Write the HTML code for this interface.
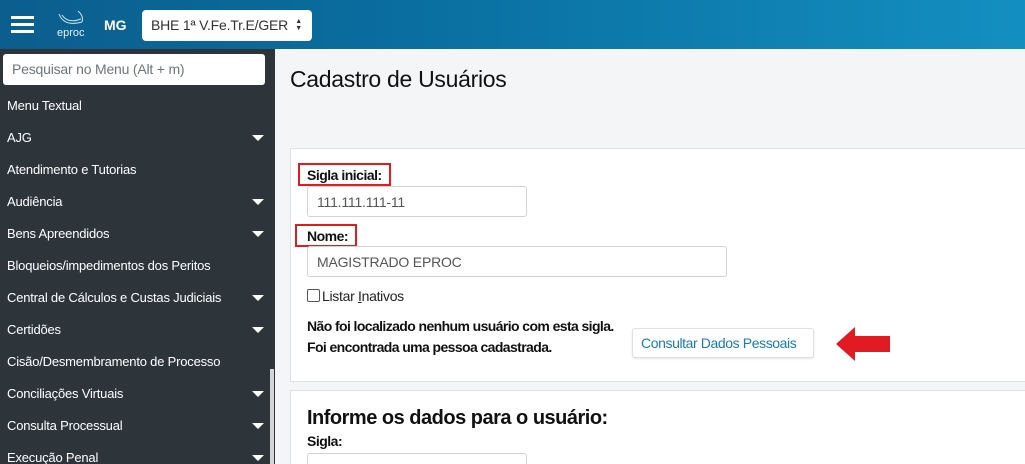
<!DOCTYPE html>
<html><head><meta charset="utf-8"><style>
*{box-sizing:border-box;margin:0;padding:0}
html,body{width:1025px;height:464px;overflow:hidden}
body{font-family:"Liberation Sans",sans-serif;background:#f4f5f7;position:relative}
.hdr{position:absolute;left:0;top:0;width:1025px;height:49px;background:linear-gradient(90deg,#0b5e8e,#0a6ea0 40%,#138fc0)}
.side{position:absolute;left:0;top:49px;width:275px;height:415px;background:#2d343a;overflow:hidden}
.search{position:absolute;left:3px;top:5px;width:262px;height:31px;background:#fff;border-radius:3px;font-size:14px;color:#6c757d;padding:7px 9px;letter-spacing:-0.2px}
.mi{position:absolute;left:7px;color:#fff;font-size:13px;letter-spacing:-0.2px}
.arr{position:absolute;left:252px;width:0;height:0;border-left:6px solid transparent;border-right:6px solid transparent;border-top:6px solid #fff}
.card{position:absolute;background:#fff;border:1px solid #dee2e6}
.lbl{position:absolute;font-size:14px;font-weight:bold;color:#111;letter-spacing:-0.5px;white-space:nowrap}
.inp{position:absolute;border:1px solid #ced4da;border-radius:3px;background:#fff;font-size:14px;color:#555;padding:7px 9px;letter-spacing:-0.2px}
.red{position:absolute;border:2px solid #e21b23}
</style></head><body>
<div class="hdr">
<div style="position:absolute;left:11px;top:16px;width:23px;height:3px;background:#fff;box-shadow:0 7px 0 #fff,0 14px 0 #fff"></div>
<svg style="position:absolute;left:58px;top:10px" width="26" height="20"><path d="M1 4 Q6 17 24 12 M4 5 Q10 14 23 9 M20 1 Q26 6 24 12" stroke="#cfe3f0" fill="none" stroke-width="1"/></svg>
<div style="position:absolute;left:57px;top:27px;color:#e6f0f7;font-size:11px">eproc</div>
<div style="position:absolute;left:104px;top:17px;color:#fff;font-weight:bold;font-size:14px">MG</div>
<div style="position:absolute;left:142px;top:10px;width:170px;height:31px;background:#fff;border-radius:4px;font-size:14px;color:#333;padding:7px 9px;letter-spacing:-0.2px">BHE 1ª V.Fe.Tr.E/GER<span style="position:absolute;right:10px;top:8px;font-size:7px;line-height:7px">▲<br>▼</span></div>
</div>
<div class="side">
<div class="search">Pesquisar no Menu (Alt + m)</div>
<div class="mi" style="top:49px">Menu Textual</div>
<div class="mi" style="top:81px">AJG</div><div class="arr" style="top:86px"></div>
<div class="mi" style="top:113px">Atendimento e Tutorias</div>
<div class="mi" style="top:145px">Audiência</div><div class="arr" style="top:150px"></div>
<div class="mi" style="top:177px">Bens Apreendidos</div><div class="arr" style="top:182px"></div>
<div class="mi" style="top:209px">Bloqueios/impedimentos dos Peritos</div>
<div class="mi" style="top:241px">Central de Cálculos e Custas Judiciais</div><div class="arr" style="top:246px"></div>
<div class="mi" style="top:273px">Certidões</div><div class="arr" style="top:278px"></div>
<div class="mi" style="top:305px">Cisão/Desmembramento de Processo</div>
<div class="mi" style="top:337px">Conciliações Virtuais</div><div class="arr" style="top:342px"></div>
<div class="mi" style="top:369px">Consulta Processual</div><div class="arr" style="top:374px"></div>
<div class="mi" style="top:401px">Execução Penal</div><div class="arr" style="top:406px"></div>
<div style="position:absolute;left:270px;top:320px;width:4px;height:95px;background:#d5d5d5"></div>
</div>
<div style="position:absolute;left:290px;top:66px;font-size:23px;color:#111;letter-spacing:-0.3px">Cadastro de Usuários</div>
<div class="card" style="left:290px;top:148px;width:745px;height:234px"></div>
<div class="red" style="left:298px;top:163px;width:93px;height:23px"></div>
<div class="lbl" style="left:307px;top:167px">Sigla inicial:</div>
<div class="inp" style="left:307px;top:186px;width:220px;height:31px">111.111.111-11</div>
<div class="red" style="left:295px;top:224px;width:62px;height:23px"></div>
<div class="lbl" style="left:307px;top:228px">Nome:</div>
<div class="inp" style="left:307px;top:246px;width:420px;height:31px">MAGISTRADO EPROC</div>
<div style="position:absolute;left:307px;top:289px;width:13px;height:13px;border:1px solid #555;border-radius:2px;background:#fff"></div>
<div style="position:absolute;left:322px;top:288px;font-size:14px;color:#222;letter-spacing:-0.3px">Listar <u>I</u>nativos</div>
<div class="lbl" style="left:307px;top:316px;line-height:21px;letter-spacing:-0.6px">Não foi localizado nenhum usuário com esta sigla.<br>Foi encontrada uma pessoa cadastrada.</div>
<div style="position:absolute;left:632px;top:328px;width:182px;height:30px;background:#fff;border:1px solid #dde1e5;border-radius:3px;box-shadow:0 1px 2px rgba(0,0,0,.1);font-size:14px;color:#1a7ab8;padding:6px 8px;white-space:nowrap;letter-spacing:-0.4px">Consultar Dados Pessoais</div>
<svg style="position:absolute;left:835px;top:326px" width="56" height="36"><path d="M1 18 L20 1 L20 10 L55 10 L55 26 L20 26 L20 35 Z" fill="#e21b23"/></svg>
<div class="card" style="left:290px;top:390px;width:745px;height:80px"></div>
<div style="position:absolute;left:307px;top:407px;font-size:20px;font-weight:bold;color:#111;letter-spacing:-0.5px">Informe os dados para o usuário:</div>
<div class="lbl" style="left:307px;top:433px">Sigla:</div>
<div class="inp" style="left:307px;top:453px;width:220px;height:31px"></div>
</body></html>
